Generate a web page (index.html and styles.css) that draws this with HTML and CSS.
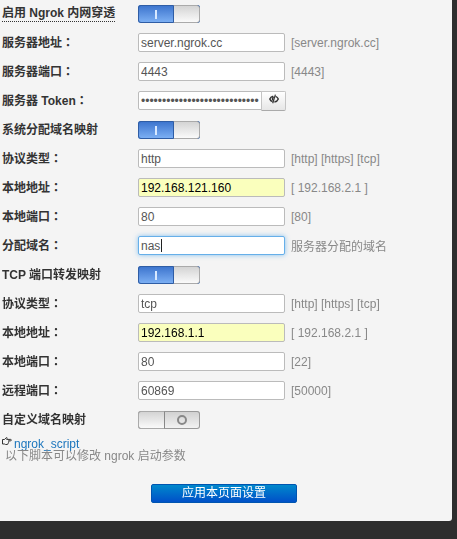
FILE: index.html
```
<!DOCTYPE html>
<html lang="zh-CN">
<head>
    <meta charset="UTF-8">
    <meta name="viewport" content="width=device-width, initial-scale=1.0">
    <title>Ngrok 内网穿透</title>
    <link rel="stylesheet" href="styles.css">
</head>
<body>
    <form class="panel">
        <div class="row">
            <label for="enable"><span class="tip">启用 Ngrok 内网穿透</span></label>
            <input type="checkbox" class="switch" id="enable" checked>
        </div>
        <div class="row">
            <label for="server">服务器地址<span class="colon" lang="zh-TW">：</span></label>
            <input type="text" class="field" id="server" value="server.ngrok.cc">
            <span class="hint">[server.ngrok.cc]</span>
        </div>
        <div class="row">
            <label for="port">服务器端口<span class="colon" lang="zh-TW">：</span></label>
            <input type="text" class="field" id="port" value="4443">
            <span class="hint">[4443]</span>
        </div>
        <div class="row">
            <label for="token">服务器 Token<span class="colon" lang="zh-TW">：</span></label>
            <div class="group">
                <input type="password" class="field" id="token" value="0123456789012345678901234567">
                <button type="button" class="eye" aria-label="显示 Token">
                    <svg width="10" height="10" viewBox="0 0 10 10" fill="none" stroke="#333">
                        <path d="M4.2 2.2C2.5 2.6 1.2 3.8.8 5c.4 1.2 1.4 2.2 2.7 2.7M6.5 2.4C7.9 2.9 8.9 4 9.3 5 8.7 6.6 7.1 7.8 5.4 8" stroke-width="1.4"/>
                        <path d="M4.8 3.3C3.4 3.5 3 5.4 4 6.3" stroke-width="1.4"/>
                        <path d="M6.4.6L3.7 9.2" stroke-width="1.2"/>
                    </svg>
                </button>
            </div>
        </div>
        <div class="row">
            <label for="sysmap">系统分配域名映射</label>
            <input type="checkbox" class="switch" id="sysmap" checked>
        </div>
        <div class="row">
            <label for="proto">协议类型<span class="colon" lang="zh-TW">：</span></label>
            <input type="text" class="field" id="proto" value="http">
            <span class="hint">[http] [https] [tcp]</span>
        </div>
        <div class="row">
            <label for="lanip">本地地址<span class="colon" lang="zh-TW">：</span></label>
            <input type="text" class="field filled" id="lanip" value="192.168.121.160">
            <span class="hint">[ 192.168.2.1 ]</span>
        </div>
        <div class="row">
            <label for="lanport">本地端口<span class="colon" lang="zh-TW">：</span></label>
            <input type="text" class="field" id="lanport" value="80">
            <span class="hint">[80]</span>
        </div>
        <div class="row">
            <label for="domain">分配域名<span class="colon" lang="zh-TW">：</span></label>
            <input type="text" class="field caret" id="domain" value="nas" autofocus>
            <span class="hint">服务器分配的域名</span>
        </div>
        <div class="row">
            <label for="tcpmap">TCP 端口转发映射</label>
            <input type="checkbox" class="switch" id="tcpmap" checked>
        </div>
        <div class="row">
            <label for="tcpproto">协议类型<span class="colon" lang="zh-TW">：</span></label>
            <input type="text" class="field" id="tcpproto" value="tcp">
            <span class="hint">[http] [https] [tcp]</span>
        </div>
        <div class="row">
            <label for="tcpip">本地地址<span class="colon" lang="zh-TW">：</span></label>
            <input type="text" class="field filled" id="tcpip" value="192.168.1.1">
            <span class="hint">[ 192.168.2.1 ]</span>
        </div>
        <div class="row">
            <label for="tcpport">本地端口<span class="colon" lang="zh-TW">：</span></label>
            <input type="text" class="field" id="tcpport" value="80">
            <span class="hint">[22]</span>
        </div>
        <div class="row">
            <label for="remote">远程端口<span class="colon" lang="zh-TW">：</span></label>
            <input type="text" class="field" id="remote" value="60869">
            <span class="hint">[50000]</span>
        </div>
        <div class="row">
            <label for="custom">自定义域名映射</label>
            <input type="checkbox" class="switch" id="custom">
        </div>
        <div class="script">
            <a href="#"><svg width="10" height="8" viewBox="0 0 10 8" fill="none" stroke="#333">
                <path d="M.5 2.5h2L4.3.6c.8-.3 1 .4.7.9l-.4.9h4c1 0 1 1.4 0 1.4H6.4c.7.3.6 1.2 0 1.4.4.5.1 1.1-.4 1.2.1.7-.3 1.1-1 1.1H3.6L2.5 7h-2z"/>
            </svg>ngrok_script</a>
            <div class="note">以下脚本可以修改 ngrok 启动参数</div>
        </div>
        <button type="submit" class="apply">应用本页面设置</button>
    </form>

    <script>
        document.getElementById('domain').focus();
    </script>
</body>
</html>
```
FILE: styles.css
```
*, *::before, *::after {
    box-sizing: border-box;
}
body, input, button {
    font-family: "Liberation Sans", "Noto Sans CJK SC", sans-serif;
    font-size: 12px;
}
body {
    margin: 0;
    background-color: #2e2e2e;
    color: #333;
}
.panel {
    margin-right: 5px;
    padding: 0 6px 18px 2px;
    background-color: #f4f4f4;
    border-radius: 0 0 3px 0;
}
.row {
    display: flex;
    align-items: center;
    height: 27px;
    margin-bottom: 2px;
}
.row label {
    width: 136px;
    font-weight: bold;
    line-height: 16px;
}
.tip {
    display: inline-block;
    border-bottom: 1px dotted #333;
}
.colon {
    font-family: "Noto Sans CJK TC", sans-serif;
    text-spacing-trim: space-all;
}
.field {
    width: 147px;
    height: 19px;
    margin: 0;
    padding: 0 2px;
    border: 1px solid #bbb;
    border-radius: 2px;
    background-color: #fff;
    color: #555;
    outline: none;
}
.field:focus {
    border-color: #66afe9;
    box-shadow: 0 0 5px rgba(82, 168, 236, 0.7);
}
/* steady caret, no blinking */
.caret:focus {
    caret-color: transparent;
    background: linear-gradient(#222, #222) 22px 2px / 1px 13px no-repeat #fff;
}
.filled {
    background-color: #faffbd;
    color: #000;
}
.hint {
    margin-left: 6px;
    color: #888;
}
.group {
    display: flex;
    align-items: center;
}
.group .field {
    width: 124px;
    border-radius: 2px 0 0 2px;
}
.eye {
    display: flex;
    align-items: center;
    justify-content: center;
    width: 25px;
    height: 20px;
    margin-left: -1px;
    padding: 0 0 3px;
    border: 1px solid #c4c4c4;
    border-bottom-color: #aaa;
    border-radius: 0 2px 2px 0;
    background: linear-gradient(#fff, #e6e6e6);
}
.switch {
    appearance: none;
    display: flex;
    width: 62px;
    height: 18px;
    margin: 0;
    border-radius: 3px;
    background: linear-gradient(#cfcfcf, #f4f4f4);
    box-shadow: inset 0 0 0 1px #999;
    overflow: hidden;
}
/* handle */
.switch::before {
    content: "";
    width: 27px;
    border: 1px solid #aaa;
    border-right-color: #888;
    border-radius: 3px 0 0 3px;
    background: linear-gradient(#d4d4d4, #fafafa);
}
/* O mark */
.switch::after {
    content: "";
    width: 10px;
    height: 10px;
    margin: 4px 0 0 12px;
    border: 2px solid #888;
    border-radius: 50%;
}
.switch:checked {
    flex-direction: row-reverse;
    justify-content: space-between;
    background: linear-gradient(#3a72cc, #7fb2f5);
    box-shadow: inset 0 0 0 1px #2f5da5;
}
.switch:checked::before {
    border-color: #aaa;
    border-left-color: #2f5da5;
    border-radius: 0 3px 3px 0;
}
.switch:checked::after {
    width: 2px;
    height: 9px;
    margin: 5px 0 0 17px;
    border: none;
    border-radius: 0;
    background-color: #d8e9ff;
}
.script {
    padding-top: 2px;
    line-height: 12px;
}
.script a {
    color: #1c76bd;
    text-decoration: none;
}
.script svg {
    margin-right: 2px;
    vertical-align: 3px;
}
.note {
    padding-left: 3px;
    color: #888;
}
.apply {
    display: block;
    width: 146px;
    height: 19px;
    margin: 22px auto 0;
    padding: 0 0 1px;
    border: 1px solid #0055b0;
    border-radius: 2px;
    background: linear-gradient(#0088cc, #0050c8);
    color: #fff;
    line-height: 16px;
    cursor: pointer;
}
```
